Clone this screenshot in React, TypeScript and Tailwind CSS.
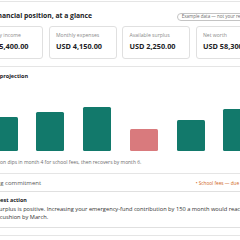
const cards = [
  { label: 'Monthly income', value: 'USD 5,400.00' },
  { label: 'Monthly expenses', value: 'USD 4,150.00' },
  { label: 'Available surplus', value: 'USD 2,250.00' },
  { label: 'Net worth', value: 'USD 58,300.00' },
];

// projected balance per month, month 4 dips for school fees
const bars = [
  { month: 1, h: 34, dip: false },
  { month: 2, h: 39, dip: false },
  { month: 3, h: 44, dip: false },
  { month: 4, h: 22, dip: true },
  { month: 5, h: 31, dip: false },
  { month: 6, h: 42, dip: false },
];

export default function App() {
  return (
    <div className="w-[240px] h-[240px] overflow-hidden bg-white">
      <div className="-ml-[25px] w-[289px] font-['Open_Sans',sans-serif] text-[#202124]">
        {/* Overview */}
        <section className="mt-px border-t border-[#e5e5e5] pt-[9px] pb-[7px]">
          <div className="flex items-center justify-between h-[9px]">
            <h2 className="text-[6.8px] leading-[9px] font-bold whitespace-nowrap">
              Your financial position, at a glance
            </h2>
            <span className="mt-[2px] h-[8px] flex items-center rounded-full border border-[#c4c4c4] px-[3.5px] text-[4.5px] leading-none text-[#6b6b6b] whitespace-nowrap">
              Example data — not your real figures
            </span>
          </div>
          <div className="mt-[6px] grid grid-cols-[repeat(4,68px)] gap-[5.5px]">
            {cards.map((c) => (
              <div
                key={c.label}
                className="h-[33px] rounded-[3px] border border-[#e0e0e0] px-[6.5px] pt-[4.5px]"
              >
                <div className="text-[5.1px] leading-[7px] text-[#8a8a8a] whitespace-nowrap">{c.label}</div>
                <div className="mt-[2px] text-[7.3px] leading-[10px] font-bold whitespace-nowrap">{c.value}</div>
              </div>
            ))}
          </div>
        </section>

        {/* Projection */}
        <section className="border-t border-[#e5e5e5] pt-[5px] pb-[7px]">
          <h3 className="text-[5.5px] leading-[8px] font-bold whitespace-nowrap">6-month projection</h3>
          <div className="h-[71px] flex items-end gap-[18.75px] pl-[14.5px]">
            {bars.map((b) => (
              <div
                key={b.month}
                className={b.dip ? 'w-[28px] rounded-[1.5px] bg-[#d97a7d]' : 'w-[28px] rounded-[1.5px] bg-[#12796b]'}
                style={{ height: b.h }}
              />
            ))}
          </div>
          <p className="mt-[8px] text-[4.95px] leading-[7px] text-[#6b6b6b] whitespace-nowrap">
            Cash position dips in month 4 for school fees, then recovers by month 6.
          </p>
        </section>

        {/* Upcoming commitment */}
        <div className="border-t border-[#e5e5e5] pt-[5px] pb-[4px] flex items-center justify-between">
          <span className="text-[6px] leading-[8px] text-[#555] whitespace-nowrap">Upcoming commitment</span>
          <span className="text-[4.7px] leading-[8px] text-[#d0661e] whitespace-nowrap">
            • School fees — due in month 4
          </span>
        </div>

        {/* Next best action */}
        <div className="border-y border-[#e0e0e0] px-[7.5px] pt-[5px] pb-[6px]">
          <div className="text-[5.4px] leading-[7px] font-bold whitespace-nowrap">Next best action</div>
          <p className="mt-[2px] text-[5.7px] leading-[7.7px] text-[#333] whitespace-nowrap">
            Your surplus is positive. Increasing your emergency-fund contribution by 150 a month would reach a
            <br />
            target cushion by March.
          </p>
        </div>
        <div className="mt-[7px] border-t border-[#e5e5e5] h-[10px]" />
      </div>
    </div>
  );
}
